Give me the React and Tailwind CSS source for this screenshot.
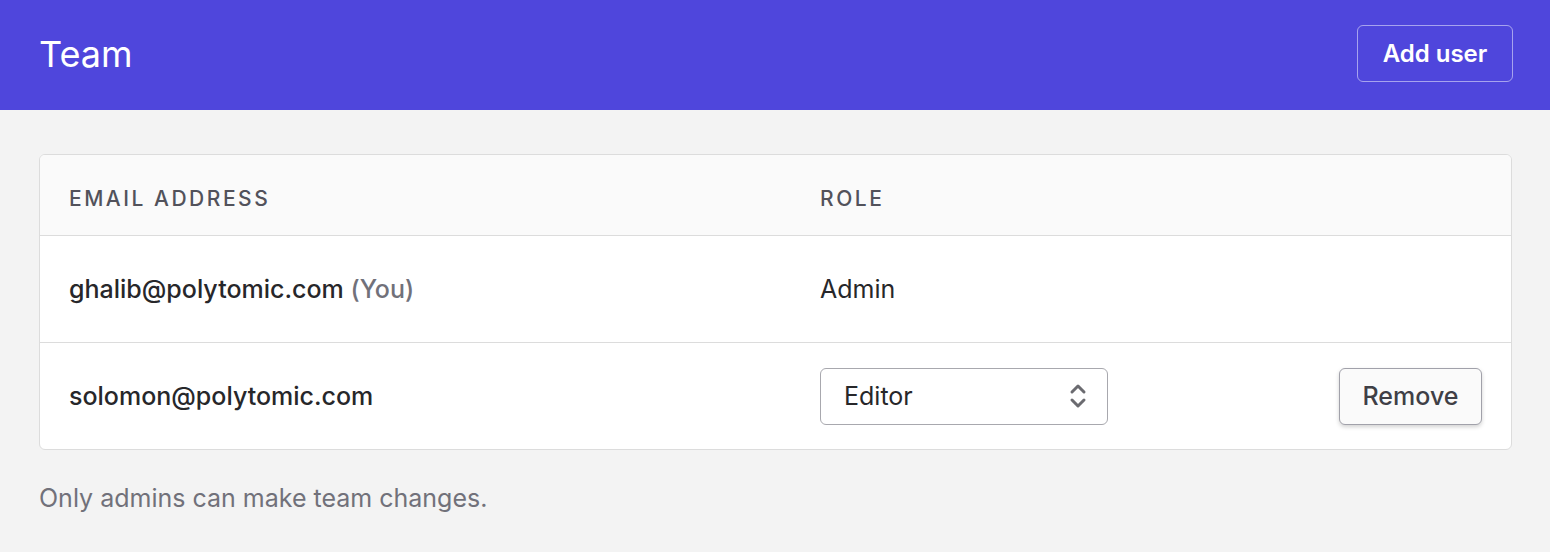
import React from "react";

export default function App() {
  return (
    <div className="min-h-[552px] bg-[#f3f3f3]" style={{ fontFamily: "Inter, 'Noto Sans', sans-serif" }}>
      <header className="h-[110px] bg-[#4f46dc] flex items-center justify-between pl-[39px] pr-[37px]">
        <h1 className="text-[36px] text-white font-normal leading-none -mt-[2px]">Team</h1>
        <button className="h-[57px] w-[156px] rounded-[6px] border border-white/50 text-white text-[24px] font-semibold -mt-[3px]">
          Add user
        </button>
      </header>
      <main className="pl-[39px] pr-[38px] pt-[44px]">
        <div className="rounded-[6px] border border-[#dcdcdc] bg-white overflow-hidden">
          <div className="h-[81px] pt-[8px] bg-[#fafafa] border-b border-[#dcdcdc] flex items-center text-[21px] tracking-[0.12em] font-medium text-[#52525b]">
            <div className="pl-[29px] w-[780px]">EMAIL ADDRESS</div>
            <div>ROLE</div>
          </div>
          <div className="h-[107px] pt-[2px] border-b border-[#dcdcdc] flex items-center text-[25px] text-[#27272a]">
            <div className="pl-[29px] w-[780px] font-medium">
              ghalib@polytomic.com <span className="text-[#71717a]">(You)</span>
            </div>
            <div>Admin</div>
          </div>
          <div className="h-[106px] flex items-center text-[25px] text-[#27272a]">
            <div className="pl-[29px] w-[780px] font-medium pt-[2px]">solomon@polytomic.com</div>
            <div className="h-[57px] w-[288px] rounded-[6px] border border-[#a8a8ae] flex items-center justify-between pl-[23px] pr-[20px]">
              <span className="pt-[1px]">Editor</span>
              <svg width="18" height="26" viewBox="0 0 18 26" fill="none" stroke="#6b6b70" strokeWidth="3" strokeLinecap="round" strokeLinejoin="round">
                <path d="M3 9l6-6 6 6" />
                <path d="M3 17l6 6 6-6" />
              </svg>
            </div>
            <div className="flex-1 flex justify-end pr-[29px]">
              <button className="h-[57px] w-[143px] pt-[1px] rounded-[6px] border border-[#a1a1aa] bg-[#fafafa] shadow-[0_2px_4px_rgba(0,0,0,0.18)] text-[25px] font-medium text-[#3f3f46]">
                Remove
              </button>
            </div>
          </div>
        </div>
        <p className="mt-[30px] text-[25px] text-[#71717a]">Only admins can make team changes.</p>
      </main>
    </div>
  );
}
